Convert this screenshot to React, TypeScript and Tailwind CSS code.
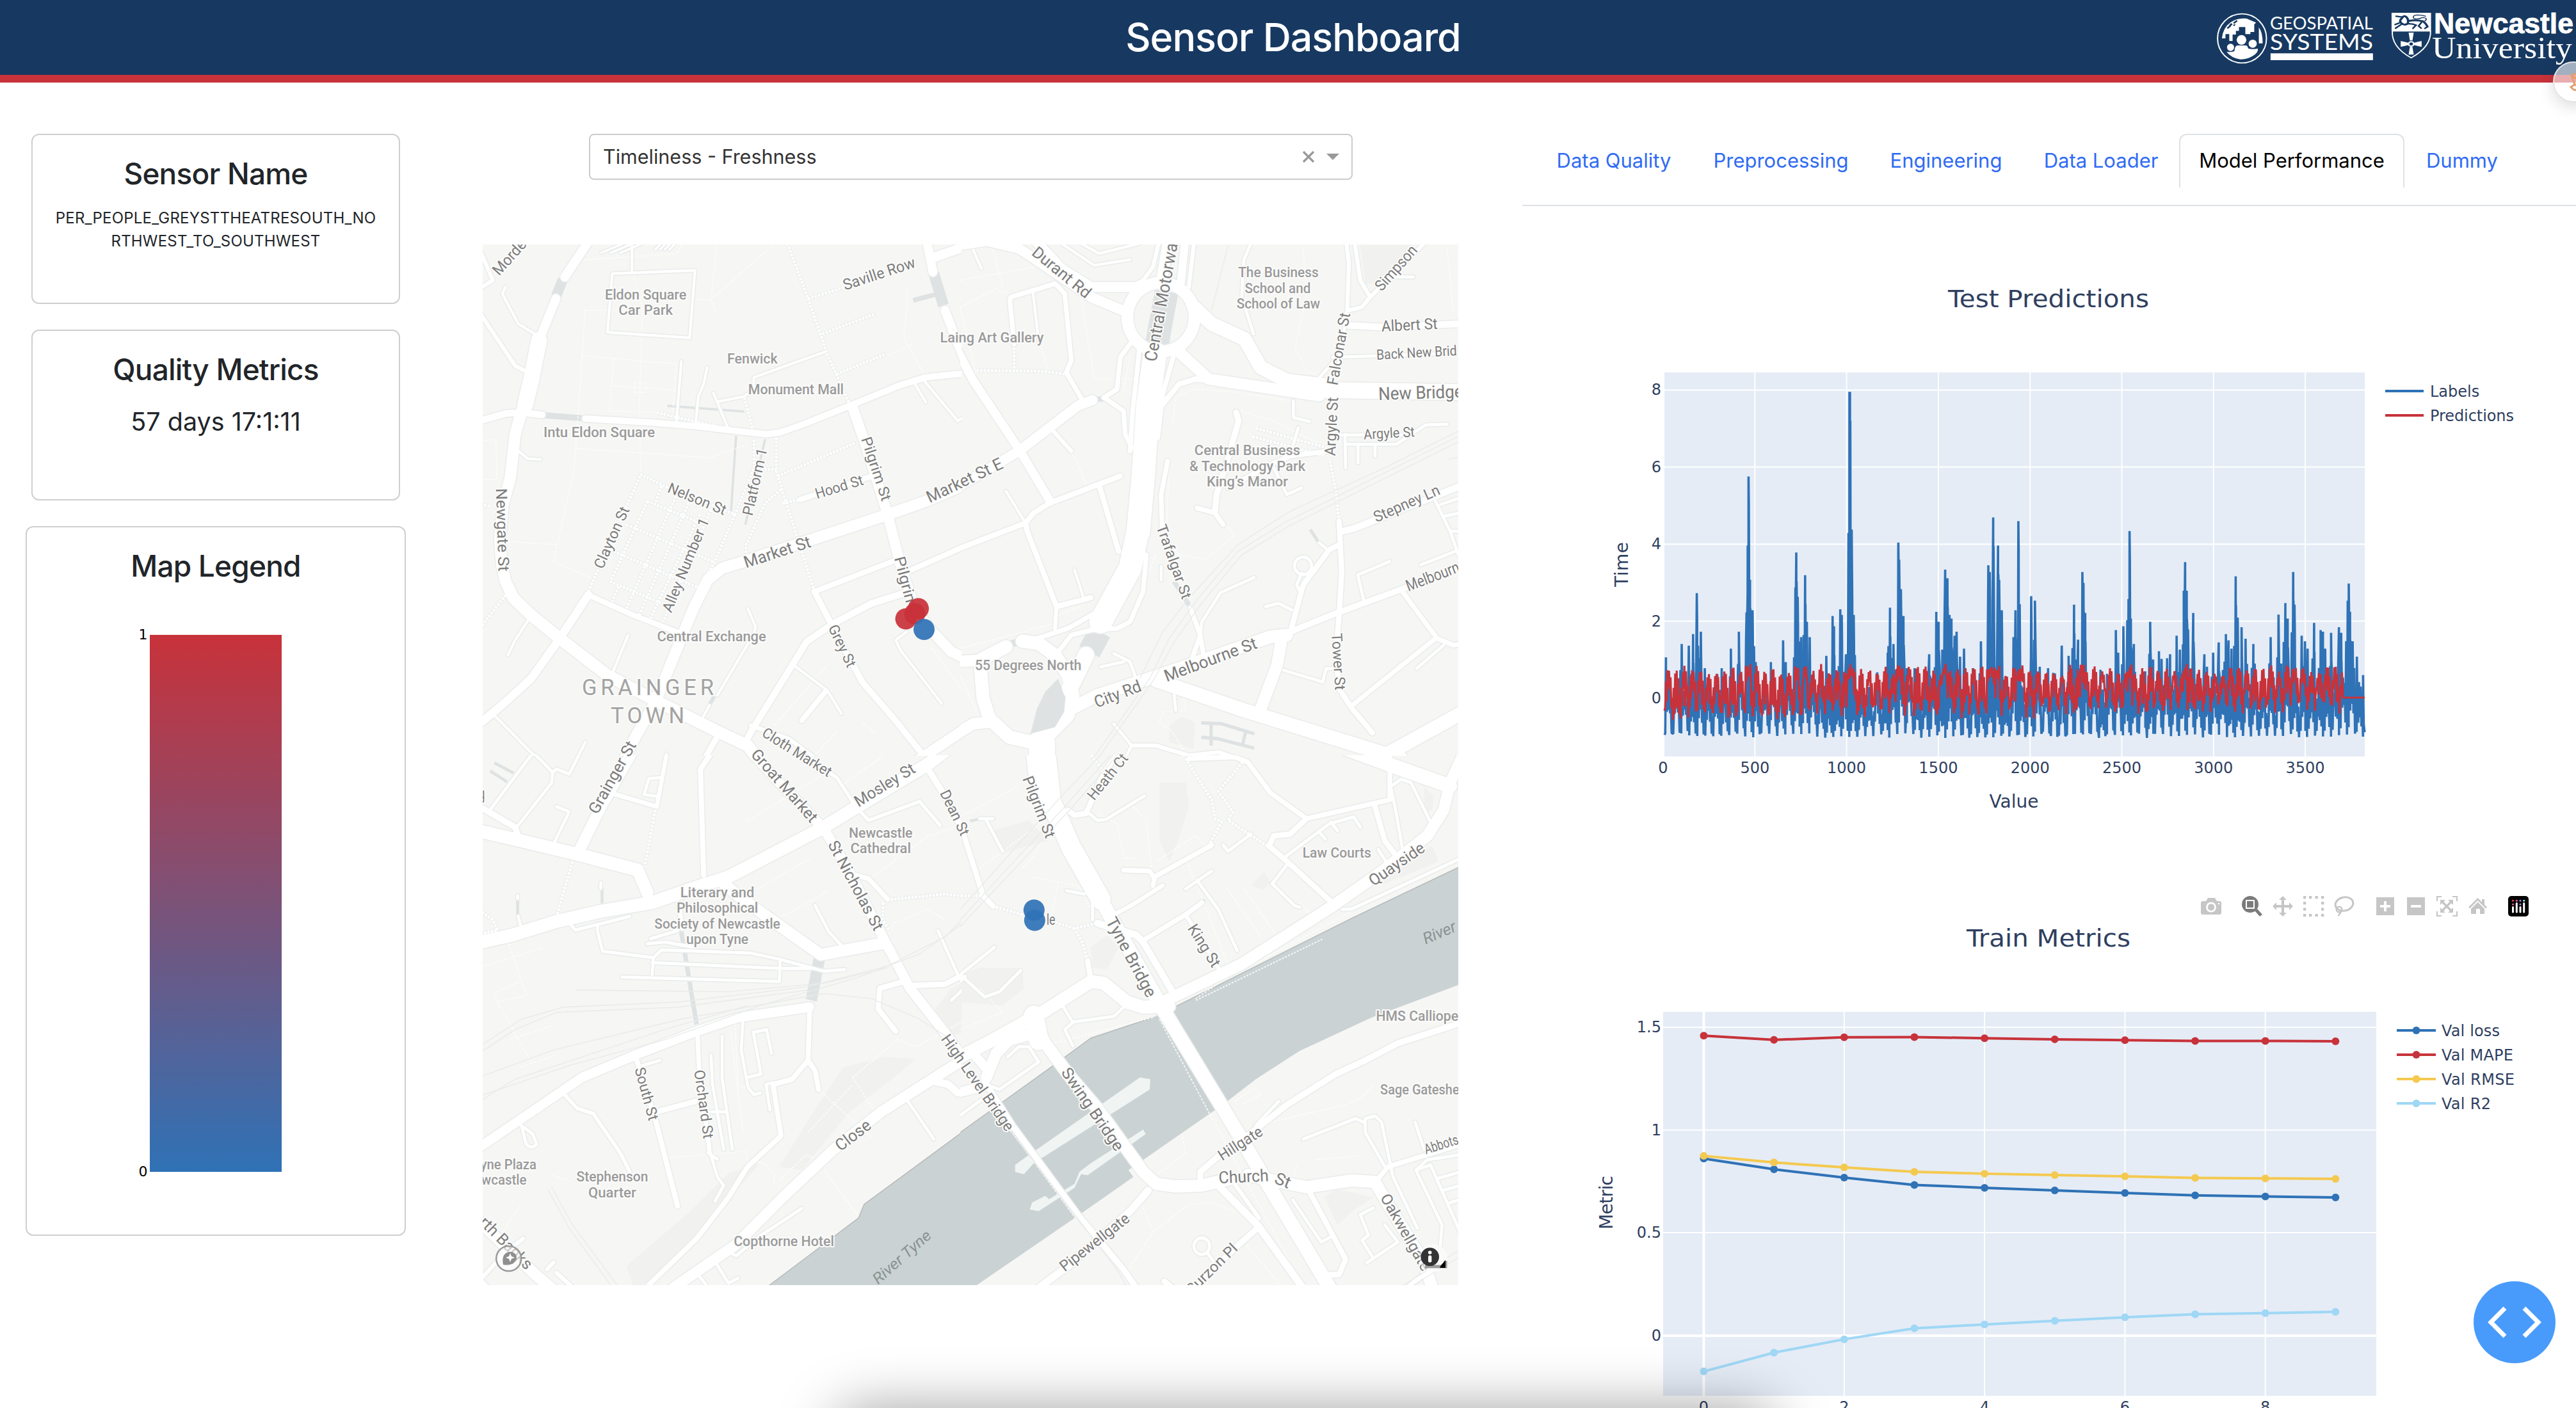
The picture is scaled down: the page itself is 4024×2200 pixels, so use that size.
import React from "react";

type Road = [number, string];
type Tile = { ox: number; oy: number; sx: number; sy: number };

const tiles: Record<string, Tile> = {
  a: { ox: 740, oy: 370, sx: 0.49745, sy: 0.52296 },
  b: { ox: 1500, oy: 370, sx: 0.5102, sy: 0.52296 },
  c: { ox: 740, oy: 1180, sx: 0.49745, sy: 0.53571 },
  d: { ox: 1500, oy: 1180, sx: 0.5102, sy: 0.53571 },
};
const tileKeys = ["a", "b", "c", "d"];
const tx = (k: string) => {
  const t = tiles[k];
  return `translate(${t.ox} ${t.oy}) scale(${t.sx} ${t.sy})`;
};
// Visible part of each tile, in map units.
const clips: Record<string, [number, number, number, number]> = {
  a: [740, 370, 762, 811],
  b: [1500, 370, 780, 811],
  c: [740, 1180, 762, 830],
  d: [1500, 1180, 780, 830],
};

const roads: Record<string, Road[]> = {
  a: [
    [28, "M370 0L286 120M258 185L205 310"],
    [50, "M205 310L180 430L162 500"],
    [36, "M165 480L145 540L130 590L115 720L92 800L82 900L88 980L100 1030L125 1080L180 1130L270 1200L420 1310L580 1390L770 1480L860 1520L900 1568"],
    [20, "M0 555L100 528L150 525L215 532"],
    [19, "M350 543L560 555L700 566L850 583L920 590L960 585L1030 562L1180 505L1340 443L1420 420L1568 405"],
    [34, "M1600 717L1420 790L1300 830L1060 905L850 970L780 990L735 1025L690 1110L600 1320L570 1390L510 1490L430 1640"],
    [32, "M1190 510L1230 620L1290 800L1305 850L1340 980L1385 1110L1440 1180L1500 1240L1600 1285"],
    [28, "M1420 0L1442 105M1435 65L1600 10M1480 220L1520 320L1600 500"],
    [25, "M360 1070L270 1200L180 1320L100 1390L0 1470"],
    [16, "M360 1070L500 1130L650 1185M1070 1060L1320 968M1375 995L1600 900"],
    [19, "M1070 1060L1130 1170L1220 1330L1320 1440L1400 1535L1430 1568"],
    [20, "M1350 1065L1250 1095L1130 1155L1045 1210L1000 1280L870 1480L850 1520"],
    [32, "M1370 1580L1600 1435"],
    [8, "M1360 1180L1325 1205L1340 1235L1470 1395M435 110L695 100L678 302L420 285ZM497 20V105M100 150L90 170L140 260L200 295M1105 343L880 420L878 460L845 478L770 492M753 467L800 575M652 372L636 560M733 390L722 440L705 478L697 560M140 640L170 663L210 665"],
    [12, "M20 40L60 130L0 165M0 200L130 385L160 400M870 1460L990 1500L1160 1620"],
    [16, "M1025 785L1250 715M1105 1358L1030 1445"],
    [8, "M1410 425L1520 550L1600 500M1380 430L1420 495M860 1110L885 1165L880 1185L765 1370M740 1400L720 1435M485 1190L437 1300M175 1140L130 1205L107 1250M1005 1280L1110 1355L1155 1425M65 1430L185 1545L230 1568M185 1545L170 1568M350 1510L320 1568M605 1545V1568"],
    [18, "M770 1485L720 1568"],
    [6, "M400 48L470 20M430 48L500 20M460 48L530 20M570 38L590 18M585 38L605 18M600 38L620 18M615 38L635 18"],
  ],
  b: [
    [34, "M640 0L615 140"],
    [24, "M690 0L675 140"],
    [12, "M718 0L700 150M612 0L590 90L560 130L520 150"],
    [36, "M615 137A103 103 0 1 1 614 137Z"],
    [72, "M596 350L575 500L560 720L545 880"],
    [70, "M548 860L520 990L430 1150"],
    [14, "M655 350L620 470L605 600M548 340L528 520L520 640M570 950L560 1060L520 1150L480 1170L400 1175L340 1190L300 1240M420 1120L330 1170L220 1205"],
    [30, "M-20 28L80 12L180 35L310 120L400 180L510 225M200 -20L310 95L400 150L530 150"],
    [42, "M715 210L770 260L870 305L920 390L1000 430L1130 445"],
    [34, "M660 335L760 425L1100 475"],
    [48, "M1000 440L1130 458L1568 465"],
    [16, "M620 500L670 440L720 425L780 430"],
    [26, "M-30 300L40 430L180 635L275 790"],
    [30, "M-20 755L180 640L360 505L405 488"],
    [14, "M440 480L480 455L490 360L520 320M440 480L500 520L505 590L525 630"],
    [14, "M165 320L152 190L155 180L290 140L320 170L340 370L325 405L375 490"],
    [8, "M222 160L240 310M350 995L378 1080M140 760L200 855M40 40L65 95M370 20L425 50L550 20M310 20L410 85L520 68"],
    [16, "M-10 934L200 855L225 825L275 795L490 715M425 740L485 940M200 855L205 880L295 1105L400 1078"],
    [12, "M275 570L340 640M295 1105L290 1170"],
    [40, "M190 1208L240 1215L290 1250L330 1310L345 1370L330 1430L270 1490M140 1225L60 1265L70 1380L90 1440L150 1495L240 1515"],
    [34, "M-20 1270L60 1265M-20 1490L40 1455L90 1450"],
    [80, "M250 1510V1580"],
    [50, "M385 1250L335 1350"],
    [38, "M340 1410L420 1370L610 1310L700 1280L950 1195L1000 1190"],
    [18, "M990 1188L1150 1125L1360 1050L1568 970"],
    [42, "M600 1325L870 1415L1250 1530L1350 1560"],
    [42, "M1280 1560L1568 1405"],
    [36, "M985 1195L970 1280L920 1410"],
    [16, "M1010 1185L1050 1040L1130 935L1160 920M1160 850L1168 1000L1160 1130L1150 1250L1160 1350L1200 1410L1262 1482"],
    [20, "M1170 880L1210 870L1568 730"],
    [9, "M1050 957A26 26 0 1 1 1049 957ZM1040 1060L1030 1040L1045 1005M1480 1220L1397 1290M990 1295L1110 1330L1120 1290L1150 1290M1235 1085L1217 1010L1315 970M1410 980L1515 940M1455 790L1500 880L1525 950M1470 800L1530 780M1480 835L1530 825M1500 880H1530M900 1018L797 1063L740 1150L735 1190M935 1105L975 1095L1015 1115M1125 935L1100 915M615 1025V985"],
    [14, "M1350 1055L1460 1200L1510 1220L1568 1210M1455 1200L1200 1400M635 670L615 770L618 870M705 1110L735 1190L745 1250M735 1190L710 1260"],
    [18, "M845 525L852 550L820 660L785 770L780 820"],
    [14, "M725 810L780 825L805 860M820 750L950 680L1010 655L1130 640"],
    [9, "M955 680L1000 770L1045 750M1020 490V540L1070 552M1035 570L1020 620M1165 592H1350M1180 620H1335L1425 562L1490 560M1178 590L1180 690M1218 620V675M1270 620V655M890 20L868 70L862 180L898 290M1140 360L1300 355L1568 345M1185 215L1165 350L1100 420M1290 120H1387M430 1285L500 1270M470 1245L520 1270L540 1325M655 1370L660 1415M470 1455L525 1520M500 1568L525 1520"],
    [12, "M1180 0L1190 80L1185 215M1205 0L1225 130L1255 180L1230 210L1190 220M1255 180L1430 10M525 1520L600 1520L700 1550L790 1540L880 1568"],
    [20, "M1190 265L1300 270L1568 258"],
  ],
  c: [
    [38, "M0 217L150 250L330 290L515 335L545 400"],
    [38, "M0 550L120 525L260 485L400 455L560 430L700 385L800 355L1090 215L1240 130L1420 30L1520 -40"],
    [34, "M510 -30L400 150L325 290"],
    [16, "M745 -5L712 40L722 350"],
    [19, "M1420 30L1500 150L1545 240L1575 320"],
    [30, "M860 -20L970 90L1100 215L1180 340L1290 540L1370 680L1480 810L1580 940"],
    [10, "M1030 0L1140 65L1200 150L1240 190L1400 135L1465 205"],
    [34, "M780 370L830 410L1010 530L1090 582L1290 548"],
    [28, "M1055 735L830 765L700 805L520 870L340 940L0 1155"],
    [15, "M1055 740L1050 890L1000 945L940 960L965 1110L860 1200L800 1290L700 1410L550 1545M1050 890L1072 920L1083 975"],
    [9, "M390 495L388 510L400 555L405 572L560 590M560 640L565 590L590 568L870 577L960 595L1100 630L1165 625M560 605L960 622H1060M465 647L960 660L962 600M545 550L600 545L690 560M555 535L640 512M300 490L320 510L490 470M138 410V418M140 470L148 500M399 372V388"],
    [14, "M645 440L655 505M1200 350L1240 360L1300 420"],
    [32, "M560 1600L640 1545L820 1430L970 1290L1130 1150L1280 1040L1440 945L1568 870"],
    [22, "M1440 950L1490 960L1520 985L1580 980"],
    [16, "M510 885L570 1060L640 1315M575 1040L695 1010"],
    [14, "M703 820L708 920L740 1150"],
    [9, "M740 1150L765 1230L785 1255L758 1300M735 1160L765 1178M780 820V940L812 1150M745 875L750 960L785 1150M733 1040H790M845 780L840 860L862 970L880 990L900 985M935 870L920 800L878 808L902 930L860 940M940 955L918 960L930 1035M530 905L585 890"],
    [11, "M285 990L325 1030L375 1045L460 1160L490 1215"],
    [9, "M150 1080L165 1135Q180 1150 198 1135L185 1105L158 1085M180 0L55 155M195 0L248 50L245 80L135 210M248 50L260 40L300 55L330 0M260 150L300 165L250 260M590 65L550 68L535 115L578 120"],
    [18, "M0 140L130 210L142 240"],
    [13, "M605 0L575 150L430 110"],
    [9, "M1072 438L1115 515L1155 555M1458 512L1520 640L1545 675L1500 715M1360 1005L1445 1120M1030 1322L895 1405L825 1460L800 1450M760 1480L800 1540L830 1525M700 1510L730 1545"],
    [16, "M1370 672L1480 668L1580 620M1350 660L1275 680L1270 740L1325 805"],
    [34, "M0 1345L120 1450L200 1520L260 1568"],
    [12, "M0 1550L100 1450L155 1410M230 1500L250 1480M260 1510L330 1568M0 1510L60 1568"],
  ],
  d: [
    [90, "M245 -20L262 120"],
    [60, "M262 100L340 270L430 420"],
    [42, "M400 370L620 740L830 1070L960 1280L1140 1568"],
    [34, "M630 715L860 610L1140 440L1290 340L1430 235L1480 160L1500 80L1568 -60"],
    [42, "M1180 -20L1350 40L1500 90"],
    [14, "M1315 -20V130L1060 185L950 110L880 20L840 5L700 10"],
    [16, "M1060 185L1010 230L960 235L945 265L995 305L1150 440M1270 150L1300 250L1340 300"],
    [9, "M990 300L1130 200L1205 180L1225 210M1135 195L1155 220M1100 225L1118 245M1320 90L1350 70L1380 80L1445 205M1320 100L1335 170L1355 280M1280 275L1310 320M1000 320L955 375L1025 440L1040 443M1170 450L1200 448L1568 285"],
    [38, "M-10 885L120 820L260 745L400 660L440 665L510 720L560 735L640 732"],
    [60, "M225 760L240 830"],
    [36, "M240 800L260 840L330 930L420 1030L560 1215L600 1250L660 1258L740 1255L830 1235M880 1225L1060 1260L1200 1240L1270 1245L1310 1310L1420 1480L1450 1568"],
    [16, "M400 655L390 600M0 200L70 410L100 440"],
    [9, "M80 190L130 280M60 185H100M75 960L120 975L240 895L210 850L180 850L145 880M0 1050L65 1005M310 725L345 780L320 800L345 848M345 778L470 762L500 735M325 395L380 405M405 430V480M0 640L105 560M0 640L75 705L120 690L185 628M0 660L15 645"],
    [34, "M80 940L110 870L150 830L210 815"],
    [28, "M-10 985L75 965M40 870L85 920"],
    [12, "M470 465L520 440L620 380M690 465L800 635"],
    [14, "M500 335L580 338L595 360L590 380M595 355L770 262M560 540L690 465L740 430"],
    [20, "M420 490L540 525L560 545L650 690"],
    [9, "M725 365L790 450L848 570M690 390L770 338M805 262L820 280L890 230M395 170L420 190L445 188L565 118M905 1080L975 1010"],
    [16, "M330 160L350 175L385 170L440 50L480 0"],
    [18, "M80 960L160 1080L360 1340L500 1500L550 1568"],
    [18, "M735 1250V1215L790 1170L900 1095L1000 1020L1150 930L1240 890L1340 840L1568 770"],
    [22, "M220 1568L330 1490L520 1330L575 1270M785 1250L910 1370L1060 1568"],
    [12, "M840 1250L870 1290L915 1350"],
    [18, "M915 1375L850 1430L700 1568M625 1535L650 1555"],
    [9, "M740 1408A24 24 0 1 1 739 1408ZM755 1450L775 1475"],
    [16, "M1070 1275L1180 1470L1160 1515L1110 1515"],
    [9, "M1018 1297L1105 1420L1135 1405M1240 1100V1060L1270 1052L1290 1070L1325 1230L1400 1380M1300 1200L1240 1100M1050 1120L1210 1060L1235 1070M1393 1070L1420 1150M1568 1160L1430 1180L1395 1210L1475 1370L1470 1430M1395 1210L1440 1195L1530 1390M1460 1235L1568 1205M1475 1270L1568 1245M1500 1305L1568 1285M1265 1320L1225 1340L1250 1400L1230 1415L1260 1460M1245 1480L1340 1420L1300 1370"],
    [14, "M1275 1240L1310 1200L1568 1125M1350 1568L1450 1490"],
  ],
};

const footways: Record<string, string> = {
  a: "M360 1060L525 710L600 745L820 830L880 690V600M820 830L755 975L705 1050M545 790L700 850M545 790L430 1030L590 1095M635 775L480 1110M675 795L520 1130M710 830L555 1140M745 815L595 1150M480 860L755 972M440 940L705 1048M850 480L880 590M965 755L915 795L855 920V960M955 715L1200 615M880 695H950M950 600L950 700L1010 880L1070 1060M985 20L1050 185L1110 350L1180 500M1050 185L1200 140M1095 290L1260 230M1140 410L1295 350M100 1070L20 1170M575 525L800 575M590 745L570 795M970 795L1025 785M455 1045L435 1090M0 795L50 805",
  b: "M50 400L160 400L260 402L330 412M165 320V400M1132 670L1150 760L1160 850M905 572L1120 630M895 597L1120 655",
  c: "M570 160L537 325M310 310L262 465M0 525L75 510L60 480L28 460M1568 415L1480 405L1300 422M1285 430V480L1305 510",
  d: "M390 600L375 550L350 505L420 490M350 505L290 487M190 465L100 440M75 410H0M760 265L800 195L780 185L770 130L690 10M865 20L790 105L835 165L820 190L940 265M400 0L440 50",
};

const trails: Record<string, string> = {
  a: "M345 220H510M350 218L320 640L315 700L250 970L370 1020M320 632L740 660L860 620M500 100L530 220L520 520L525 710M335 70L640 50L655 20M765 20L745 188L940 25M600 185L745 188L760 225M440 365L425 520L600 525M635 380L625 525M340 355L635 380M440 445L635 458M505 435H540V465H505ZM100 910L258 920M28 610L70 605L72 725H28M1360 160V220L1350 300L1420 420M1300 355L1380 320M1440 1230L1530 1350M945 1460L1110 1280M1140 1480L1050 1568M1220 1450L1260 1485M1510 1230H1568",
  b: "M0 210L110 155L140 170M100 40L130 150M370 180L410 425L560 425M240 310L270 400M0 130L230 90M0 210L60 460L200 640M500 460L520 350M1050 30L1060 180L1025 330L1060 400L1110 420M650 560L660 480L720 455L850 465L1010 490M640 680L630 900L670 950L750 965L840 890L810 860M860 520L960 550L1120 630M0 1230L290 1155M300 1130L370 1105M1490 30L1510 220M280 570L350 660L385 740M600 950L560 1040M400 1380L610 1310M0 1310L50 1420M700 1560L650 1480L610 1450L620 1420L690 1415L685 1380",
  c: "M600 1175L855 1155L860 1185L910 1190L945 1220L940 1260M805 790L845 1100M820 785L830 965L860 970M1083 975L1255 1120M1190 940L1330 830L1390 850L1568 760M1190 940L1260 1040M1100 1210L1208 1345M110 550L165 700L75 720L65 695L145 660M75 720L180 895M30 615L215 563M115 828L245 790M145 910L260 875M855 195L1090 60M890 390L1060 300M970 470L1115 395M1230 370L1420 240L1568 190M1310 510L1320 490L1425 450L1480 480M1160 85L1290 0M90 1390L145 1315M245 1225L310 1245M960 1240L1045 1165L1080 1180M1050 1100L1190 960",
  d: "M0 180L180 90M60 330L300 160M190 330L220 300L300 160M210 355L360 380L430 500M280 470L300 370M355 270L370 350M420 170L480 200L500 300H540M530 150L570 190L585 330M600 310L720 235L760 270M690 300L820 610M720 710L800 660L1200 455M815 385L920 530M865 385L975 535M1040 430L1110 500M0 800L130 750L60 680M210 860L590 765M580 1240L690 1160L680 1110M610 770L760 1040L1060 1568M840 1010L900 970L920 990L860 1020M950 1070L1180 1020L1230 1000L1265 960M1085 1180L1230 1168M1030 1195L1020 1240M590 1390L700 1310L770 1305L840 1330M870 1420L1000 1568M470 1568L590 1390L555 1310M120 1050L360 1360",
};

const rails: Record<string, string> = {
  a: "",
  b: "M400 1568L580 1320L640 1200L720 1090L850 940L1000 850L1568 575M415 1568L595 1320L655 1210L735 1100L860 952L1010 862L1568 592M550 1320L620 1180L700 1080L850 920L1010 820L1300 690L1568 560M770 220L820 25M1495 665L1568 650",
  c: "M0 860L150 770L280 735L640 720L1050 675L1300 615L1480 530L1568 450M0 945L250 860L650 770L1100 695L1250 710L1400 770L1500 830M320 685L800 690L1100 665L1300 620M0 1000L300 905L600 830L900 730L1200 650L1400 580L1568 470M0 1020L130 945L600 800L860 730M0 880L130 800L260 750L640 735L1050 685M232 1265L300 1380L430 1545M245 1260L310 1370L450 1545",
  d: "M0 480L320 150L460 0M0 500L340 155L480 0M0 450L300 130L430 0M1320 1568L1568 1420M1350 1568L1568 1440M100 1030L480 1500L520 1568",
};

const tunnels: Record<string, Road[]> = {
  a: [
    [32, "M280 128L258 178"],
    [18, "M220 533L340 542"],
    [34, "M1445 110L1475 205"],
    [14, "M1380 190L1450 172"],
    [7, "M608 505L850 522M824 595L808 820M915 605L853 860"],
    [12, "M757 1370L742 1395"],
  ],
  b: [
    [72, "M632 165L602 320"],
    [70, "M428 1180L395 1240"],
    [16, "M408 485H438"],
    [22, "M150 1218L180 1210"],
    [10, "M738 1452L800 1455L900 1485M738 1495L790 1500L900 1528M768 1452V1520M875 1475L865 1515M1072 875L1095 910"],
    [14, "M655 1030L700 1100"],
  ],
  c: [
    [36, "M1085 595L1060 715"],
    [14, "M650 505L700 785"],
    [9, "M138 415V468M403 388V432M400 550V566M65 22L125 52M52 46L105 78"],
  ],
  d: [[8, "M30 192L60 186M730 432L750 422"]],
};

const water: Record<string, string> = {
  a: "",
  b: "",
  c: "M900 1568L930 1545L1130 1405L1208 1350L1226 1310L1580 1068V1568Z",
  d: "M-10 1107L285 905L400 825L590 765L645 740L1200 475L1568 308V655L1525 670L1260 765L1040 862L905 945L810 1015L765 1045L515 1210L530 1230L350 1350L50 1546V1568H-10Z",
};
const quays: Record<string, string> = {
  a: "",
  b: "",
  c: "M900 1568L930 1545L1130 1405L1208 1350L1226 1310L1580 1068",
  d: "M-10 1107L285 905L400 825L590 765M645 740L1200 475L1568 308",
};
const land: Record<string, string> = {
  a: "",
  b: "",
  c: "",
  d: "M168 1195L185 1183L550 940L582 945L580 975L225 1190L195 1222L168 1215ZM213 1325L220 1305L260 1285L272 1295L350 1250L365 1215L400 1190L560 1092L568 1105L390 1225L370 1222L350 1262L240 1330Z",
};
const tints: Record<string, string> = {
  a: "",
  b: "M1225 25L1380 25L1300 140L1240 140ZM640 1460L675 1435L718 1450L715 1530L640 1510Z",
  c: "M1160 910L1290 880L1390 885L1320 940L1180 1040L1030 1210L960 1200L1080 1020ZM680 1330L800 1220L900 1190L700 1400L560 1545H500L480 1490ZM1450 740L1500 680L1568 650V800L1500 820L1450 780Z",
  d: "M1115 1290L1150 1265L1265 1290L1200 1330L1155 1370ZM890 380L930 340L950 370L930 392ZM610 80L690 80L700 150L670 240L640 310L610 250ZM400 560L450 525L485 560L450 625L405 620ZM0 640L60 620L190 620L195 680L130 730L0 720ZM1230 380L1410 280L1445 265L1465 310L1300 375ZM1420 90L1450 120L1445 160L1420 170ZM100 220L210 190L270 250L130 285Z",
};

type Line = [string, string, number, number, number, number, number];
const streetNames: Line[] = [
  ["a", "Morde", 80, 118, 168, 25, 24],
  ["a", "Saville Row", 1166, 160, 1390, 90, 24],
  ["a", "Newgate St", 70, 752, 78, 1000, 24],
  ["a", "Clayton St", 405, 995, 490, 815, 23],
  ["a", "Nelson St", 606, 762, 785, 832, 23],
  ["a", "Alley Number 1", 620, 1125, 740, 848, 23],
  ["a", "Platform 1", 875, 835, 922, 635, 23],
  ["a", "Hood St", 1078, 783, 1226, 740, 23],
  ["a", "Pilgrim St", 1216, 604, 1282, 792, 23],
  ["a", "Market St E", 1432, 796, 1666, 690, 26],
  ["a", "Market St", 855, 990, 1062, 926, 26],
  ["a", "Pilgrim", 1320, 960, 1362, 1112, 24],
  ["a", "Grey St", 1112, 1168, 1174, 1290, 23],
  ["a", "Cloth Market", 902, 1490, 1112, 1615, 23],
  ["a", "Groat Market", 868, 1548, 1058, 1753, 25],
  ["a", "Grainger St", 388, 1728, 512, 1518, 25],
  ["b", "Durant Rd", 216, 52, 384, 186, 25],
  ["b", "Central Motorwa", 600, 375, 666, 22, 27],
  ["b", "Simpson", 1290, 165, 1402, 42, 24],
  ["b", "Falconar St", 1155, 445, 1194, 230, 24],
  ["b", "Argyle St", 1148, 655, 1157, 480, 24],
  ["b", "Albert St", 1290, 283, 1462, 275, 24],
  ["b", "Back New Brid", 1275, 367, 1521, 354, 22],
  ["b", "New Bridge", 1281, 488, 1540, 480, 28],
  ["b", "Argyle St", 1236, 605, 1392, 597, 22],
  ["b", "Stepney Ln", 1274, 854, 1472, 768, 24],
  ["b", "Melbourn", 1372, 1060, 1532, 1000, 25],
  ["b", "Trafalgar St", 600, 866, 680, 1085, 23],
  ["b", "Tower St", 1137, 1185, 1148, 1355, 23],
  ["b", "Melbourne St", 632, 1330, 912, 1228, 26],
  ["b", "City Rd", 418, 1408, 558, 1356, 26],
  ["c", "Mosley St", 1208, 152, 1390, 48, 25],
  ["c", "Dean St", 1463, 110, 1530, 238, 23],
  ["c", "St Nicholas St", 1111, 260, 1258, 515, 25],
  ["c", "South St", 505, 915, 550, 1068, 23],
  ["c", "Orchard St", 692, 920, 722, 1120, 23],
  ["c", "rth Banks", 15, 1365, 165, 1503, 25],
  ["c", "y", 22, 130, 40, 125, 24],
  ["c", "Close", 1152, 1157, 1252, 1086, 26],
  ["c", "High Level Bridge", 1466, 828, 1672, 1100, 24],
  ["d", "Pilgrim St", 190, 68, 262, 245, 24],
  ["d", "Heath Ct", 410, 134, 516, 10, 23],
  ["d", "Quayside", 1265, 383, 1426, 278, 25],
  ["d", "Tyne Bridge", 445, 484, 572, 710, 26],
  ["d", "King St", 695, 505, 772, 622, 24],
  ["d", "Swing Bridge", 307, 925, 476, 1158, 25],
  ["d", "Hillgate", 802, 1184, 930, 1106, 24],
  ["d", "Church", 792, 1249, 945, 1242, 26],
  ["d", "St", 959, 1247, 1004, 1264, 26],
  ["d", "Pipewellgate", 320, 1508, 522, 1357, 24],
  ["d", "Curzon Pl", 708, 1576, 852, 1442, 23],
  ["d", "Oakwellgate", 1285, 1290, 1415, 1508, 24],
  ["d", "Abbots", 1426, 1164, 1528, 1133, 22],
  ["d", "le", 264, 495, 291, 495, 23],
];
const riverNames: Line[] = [
  ["c", "River Tyne", 1270, 1545, 1440, 1405, 24],
  ["d", "River", 1425, 552, 1522, 512, 25],
];

type Poi = [string, string, number, number, number];
const pois: Poi[] = [
  ["a", "Eldon Square", 540, 188, 256],
  ["a", "Car Park", 540, 234, 170],
  ["a", "Fenwick", 875, 378, 158],
  ["a", "Monument Mall", 1012, 470, 300],
  ["a", "Intu Eldon Square", 394, 598, 350],
  ["a", "Central Exchange", 747, 1209, 342],
  ["b", "Laing Art Gallery", 97, 316, 317],
  ["b", "The Business", 974, 121, 246],
  ["b", "School and", 972, 168, 202],
  ["b", "School of Law", 974, 214, 256],
  ["b", "Central Business", 879, 652, 324],
  ["b", "& Technology Park", 879, 699, 355],
  ["b", "King’s Manor", 879, 746, 249],
  ["b", "55 Degrees North", 208, 1295, 326],
  ["c", "Newcastle", 1278, 240, 200],
  ["c", "Cathedral", 1278, 285, 190],
  ["c", "Literary and", 765, 415, 232],
  ["c", "Philosophical", 765, 460, 256],
  ["c", "Society of Newcastle", 765, 505, 395],
  ["c", "upon Tyne", 765, 550, 195],
  ["c", "Stephenson", 435, 1243, 225],
  ["c", "Quarter", 435, 1289, 150],
  ["c", "yne Plaza", 109, 1208, 176],
  ["c", "wcastle", 95, 1253, 142],
  ["c", "Copthorne Hotel", 974, 1432, 315],
  ["d", "Law Courts", 1153, 299, 210],
  ["d", "HMS Calliope", 1399, 775, 252],
  ["d", "Sage Gateshe", 1407, 990, 242],
];

function Along({ l, fill, italic }: { l: Line; fill: string; italic?: boolean }) {
  const t = tiles[l[0]];
  const x1 = t.ox + l[2] * t.sx;
  const y1 = t.oy + l[3] * t.sy;
  const x2 = t.ox + l[4] * t.sx;
  const y2 = t.oy + l[5] * t.sy;
  const len = Math.hypot(x2 - x1, y2 - y1);
  const ang = (Math.atan2(y2 - y1, x2 - x1) * 180) / Math.PI;
  return (
    <text
      transform={`translate(${x1} ${y1}) rotate(${ang})`}
      fontSize={l[6]}
      textLength={len}
      lengthAdjust="spacingAndGlyphs"
      fill={fill}
      fontStyle={italic ? "italic" : "normal"}
      stroke={italic ? "none" : "#fbfbfa"}
      strokeWidth={italic ? 0 : 4}
      strokeLinejoin="round"
      paintOrder="stroke"
    >
      {l[1]}
    </text>
  );
}

function CityMap() {
  return (
    <svg className="block h-[1626px] w-[1524px] font-['Roboto',sans-serif]" viewBox="754 382 1524 1626">
      <defs>
        {tileKeys.map((k) => (
          <clipPath key={k} id={`tile-${k}`}>
            <rect x={clips[k][0]} y={clips[k][1]} width={clips[k][2]} height={clips[k][3]} />
          </clipPath>
        ))}
      </defs>
      <rect x="754" y="382" width="1524" height="1626" fill="#f6f6f4" />
      {tileKeys.map((k) => (
        <g key={k} clipPath={`url(#tile-${k})`}>
          <g transform={tx(k)} fill="none">
            <path d={tints[k]} fill="#f1f1ef" />
            <path d={water[k]} fill="#cad2d3" />
            <path d={quays[k]} stroke="#b7bcbb" strokeWidth="3" />
            <path d={land[k]} fill="#f0f5f4" />
            {tunnels[k].map((r, i) => (
              <path key={i} d={r[1]} stroke="#dee2e3" strokeWidth={r[0]} />
            ))}
            <path d={trails[k]} stroke="#fdfdfc" strokeWidth="3" strokeDasharray="7 4" />
          </g>
        </g>
      ))}
      {tileKeys.map((k) => (
        <g key={k} clipPath={`url(#tile-${k})`}>
          <g transform={tx(k)} fill="none" strokeLinejoin="round">
            {roads[k].map((r, i) => (
              <path key={i} d={r[1]} stroke="#e9edeb" strokeWidth={r[0] + 6} strokeLinecap="round" />
            ))}
            <path d={footways[k]} stroke="#edf0ef" strokeWidth="12" />
          </g>
        </g>
      ))}
      {tileKeys.map((k) => (
        <g key={k} clipPath={`url(#tile-${k})`}>
          <g transform={tx(k)} fill="none" strokeLinejoin="round">
            <path d={footways[k]} stroke="#ffffff" strokeWidth="8" strokeDasharray="7 4" />
            {roads[k].map((r, i) => (
              <path key={i} d={r[1]} stroke="#ffffff" strokeWidth={r[0]} strokeLinecap="round" />
            ))}
            <path d={rails[k]} stroke="#e8ebea" strokeWidth="2.5" />
          </g>
        </g>
      ))}
      <g transform={tx("b")}>
        <path d="M640 165L662 170L640 318L610 318L585 300L600 170Z" fill="#dee2e3" />
        <path d="M300 1320L322 1380L318 1420L290 1465L215 1485L235 1410L260 1360Z" fill="#dee2e3" />
      </g>
      <g transform={tx("d")}>
        <path d="M722 715L1112 535" fill="none" stroke="#f6f6f4" strokeWidth="4" strokeDasharray="6 4" />
      </g>

      {riverNames.map((l, i) => (
        <Along key={i} l={l} fill="#8a9294" italic />
      ))}
      <g fontWeight="500">
        {pois.map((p, i) => {
          const t = tiles[p[0]];
          return (
            <text
              key={i}
              x={t.ox + p[2] * t.sx}
              y={t.oy + p[3] * t.sy}
              fontSize="21.5"
              textAnchor="middle"
              textLength={p[4] * t.sx}
              lengthAdjust="spacingAndGlyphs"
              fill="#9a9a9a"
              stroke="#fbfbfa"
              strokeWidth="4"
              strokeLinejoin="round"
              paintOrder="stroke"
            >
              {p[1]}
            </text>
          );
        })}
      </g>
      {streetNames.map((l, i) => (
        <Along key={i} l={l} fill="#7c7c7c" />
      ))}
      <g fill="#a3a3a3" fontSize="34.5" stroke="#fbfbfa" strokeWidth="4" paintOrder="stroke">
        <text x="909" y="1086" textLength="206">GRAINGER</text>
        <text x="954" y="1129.500" textLength="115">TOWN</text>
      </g>

      <g fillOpacity="0.93">
        <circle cx="1415" cy="967" r="16.5" fill="#c8323a" />
        <circle cx="1429" cy="959" r="16.5" fill="#c8323a" />
        <circle cx="1434.5" cy="951" r="16.5" fill="#c8323a" />
        <circle cx="1443.5" cy="983.5" r="16.5" fill="#2f72b6" />
        <circle cx="1615.3" cy="1422" r="16.5" fill="#2f72b6" />
        <circle cx="1616.3" cy="1438" r="16.5" fill="#2f72b6" />
      </g>

      <circle cx="794.7" cy="1966.5" r="19.5" fill="#ffffff" fillOpacity="0.6" stroke="#9a9a9a" strokeWidth="2.5" />
      <path d="M786 1976C783 1961 790 1955 799 1956C808 1958 809 1967 804 1972C799 1977 792 1977 786 1976Z" fill="#8f8f8f" />
      <path d="M797 1958L799 1963L804 1965L799 1967L797 1972L795 1967L790 1965L795 1963Z" fill="#ffffff" />

      <circle cx="2239" cy="1966" r="22" fill="#ffffff" fillOpacity="0.55" />
      <path d="M2226 1979H2258V1970" fill="none" stroke="#9b9b9b" strokeWidth="5" />
      <path d="M2251 1977L2258 1969V1981H2249Z" fill="#000000" />
      <circle cx="2233.7" cy="1963.8" r="14.3" fill="#333333" />
      <circle cx="2233.7" cy="1957" r="2.8" fill="#ffffff" />
      <rect x="2231" y="1961.5" width="5.4" height="11" rx="2.5" fill="#ffffff" />
    </svg>
  );
}

// Peaks of the observed series: [x, y] pairs in the drawing's own units.
const firstHalf: [number, number][] = [
  [95, 1005], [108, 1075], [150, 962], [175, 967], [190, 930], [203, 798], [217, 922], [231, 1040], [290, 1040], [322, 977],
  [350, 922], [377, 860], [381, 645], [384, 422], [389, 755], [398, 853], [409, 1020], [462, 1020], [505, 950], [514, 1020], [548, 780], [551, 667], [556, 810],
  [568, 940], [582, 740], [588, 890], [598, 940], [656, 1000], [678, 872], [683, 905], [705, 850], [710, 868], [725, 995], [737, 149], [739, 149], [743, 700],
  [747, 830], [752, 868], [805, 1100], [871, 990], [879, 845], [891, 962], [908, 635], [911, 690], [917, 785], [926, 872], [938, 1040], [965, 1040],
  [1016, 995], [1041, 858], [1049, 890], [1062, 980], [1072, 722], [1080, 750], [1087, 868], [1094, 880], [1105, 935], [1112, 922], [1124, 1003],
  [1138, 977], [1169, 1040], [1197, 953], [1223, 708], [1228, 730], [1240, 554], [1257, 645], [1261, 755], [1270, 853], [1311, 940], [1318, 853],
  [1328, 566], [1373, 808], [1386, 822], [1403, 1035], [1432, 1040], [1480, 967], [1504, 1000], [1523, 835], [1537, 948], [1552, 730],
  [1556, 765], [1562, 862],
];
const secondHalf: [number, number][] = [
  [120, 1045], [140, 1058], [167, 917], [174, 990], [190, 905], [202, 885], [209, 598], [213, 880], [222, 962], [257, 1050], [272, 890],
  [281, 1012], [299, 985], [307, 1010], [324, 1008], [333, 995], [353, 935], [363, 980], [375, 790], [379, 698], [384, 790], [388, 915], [404, 862],
  [438, 995], [446, 1035], [465, 990], [482, 957], [504, 930], [512, 950], [521, 977], [534, 744], [540, 877], [552, 908], [564, 945],
  [588, 962], [592, 1025], [620, 1085], [641, 940], [650, 1070], [665, 867], [673, 1025], [686, 830], [693, 880], [710, 730], [714, 835],
  [736, 935], [746, 953], [754, 977], [774, 894], [794, 917], [801, 922], [808, 977], [826, 926], [850, 908], [857, 926], [877, 822], [880, 767],
  [884, 858], [892, 953], [905, 1003], [911, 1095], [924, 1062],
];

function rng(seed: number) {
  let s = seed;
  return () => {
    s = (s * 1664525 + 1013904223) % 4294967296;
    return s / 4294967296;
  };
}

const Y0 = 1091;
const UNIT = 60.2;

function buildSeries() {
  const r = rng(7);
  const peaks = [
    ...firstHalf.map(([x, y]) => [2560 + x * 0.44643, 540 + y * 0.48469]),
    ...secondHalf.map(([x, y]) => [3220 + x * 0.5102, 540 + y * 0.48469]),
  ];
  // Each day rises from a night-time trough, with its own height and depth.
  const days = Array.from({ length: 100 }, () => ({ high: r(), low: r(), red: r(), redLow: r() }));
  const pts: [number, number][] = [];
  let n = 0;
  for (let x = 2600; x < 3694; x += 1.25) {
    n += 1;
    const t = (x - 2600) / 12.55;
    const d0 = days[Math.floor(t)];
    const day = Math.abs(Math.sin(t * Math.PI));
    const high = -0.95 + Math.pow(day, 0.8) * (1.15 + d0.high * 0.55);
    const low = -1.03 + d0.low * 0.12 + Math.max(0, day - 0.3) * (0.35 + d0.low * 0.5 + r() * 0.6);
    let v = n % 2 ? high : low;
    for (const p of peaks) {
      const d = Math.abs(x - p[0]);
      const h = (Y0 - p[1]) / UNIT;
      if (d < 2.6 && h > 1.1 && n % 2) v = Math.max(v, h * (0.35 + r() * 0.25));
    }
    pts.push([x, Y0 - v * UNIT]);
  }
  peaks.forEach((p) => {
    pts.push([p[0], p[1]]);
    pts.push([p[0] + 0.5, Math.min(Y0 + 10, p[1] + 45)]);
  });
  pts.sort((m, q) => m[0] - q[0]);

  const red: [number, number][] = [];
  n = 0;
  for (let x = 2600; x < 3660; x += 1.2) {
    n += 1;
    const t = (x - 2600) / 12.55;
    const d0 = days[Math.floor(t)];
    const day = Math.abs(Math.sin(t * Math.PI));
    const late = (x - 2600) / 1060;
    const low = -0.68 + 0.24 * late + d0.redLow * 0.25;
    const peak = 0.45 + d0.red * 0.25;
    const top = low + 0.12 + Math.pow(day, 0.6) * (peak - low) + r() * 0.08;
    let v = n % 2 ? top : low + Math.pow(day, 1.1) * (0.3 + r() * 0.6);
    for (const p of peaks) {
      if (Math.abs(x - p[0]) < 3 && p[1] < 900) v = n % 2 ? 0.7 + r() * 0.2 : 0.35 + r() * 0.3;
    }
    red.push([x, Y0 - v * UNIT]);
  }
  red.push([3660, Y0 - 1], [3694, Y0 - 1]);
  const str = (a: [number, number][]) => a.map((p) => `${p[0].toFixed(1)},${p[1].toFixed(1)}`).join(" ");
  return { blue: str(pts), red: str(red) };
}
const series = buildSeries();

const INK = "#2f3f5f";

function TestPredictions() {
  return (
    <svg className="block h-[1048px] w-[1646px] font-['DejaVu_Sans',sans-serif]" viewBox="2378 322 1646 1048" fill={INK}>
      <text x="3200" y="480" fontSize="37" textAnchor="middle" textLength="314" lengthAdjust="spacingAndGlyphs">Test Predictions</text>
      <rect x="2600" y="582" width="1094" height="600" fill="#e5ecf6" />
      <g stroke="#ffffff" strokeWidth="2">
        {[1, 2, 3, 4, 5, 6, 7].map((i) => (
          <line key={i} x1={2598 + i * 143.3} x2={2598 + i * 143.3} y1="582" y2="1182" />
        ))}
        {[2, 4, 6, 8].map((v) => (
          <line key={v} x1="2600" x2="3694" y1={Y0 - v * UNIT} y2={Y0 - v * UNIT} />
        ))}
        <line x1="2600" x2="3694" y1={Y0} y2={Y0} strokeWidth="4" />
      </g>
      <polyline points={series.blue} fill="none" stroke="#2f72b6" strokeWidth="3.6" strokeLinejoin="bevel" />
      <polyline points={series.red} fill="none" stroke="#c8323a" strokeWidth="3.2" strokeLinejoin="bevel" />
      <g fontSize="24">
        {[0, 2, 4, 6, 8].map((v) => (
          <text key={v} x="2595" y={Y0 - v * UNIT + 8} textAnchor="end">{v}</text>
        ))}
        {[0, 500, 1000, 1500, 2000, 2500, 3000, 3500].map((v) => (
          <text key={v} x={2598 + v * 0.2866} y="1207.500" textAnchor="middle">{v}</text>
        ))}
        <text x="3796" y="619.5">Labels</text>
        <text x="3796" y="657.5" textLength="131">Predictions</text>
      </g>
      <g fontSize="28">
        <text x="3146" y="1261.500" textAnchor="middle" textLength="77">Value</text>
        <text transform="translate(2543 882) rotate(-90)" textAnchor="middle" textLength="70">Time</text>
      </g>
      <line x1="3726" x2="3786" y1="611" y2="611" stroke="#2f72b6" strokeWidth="4" />
      <line x1="3726" x2="3786" y1="649" y2="649" stroke="#c8323a" strokeWidth="4" />
    </svg>
  );
}

const metrics = [
  { name: "Val loss", color: "#2f72b6", len: 91, y: [613, 654, 686, 714, 725, 735, 745, 754, 758, 762] },
  { name: "Val MAPE", color: "#c8323a", len: 112, y: [143, 158.5, 149, 148, 152.5, 156.5, 160, 163, 163, 164] },
  { name: "Val RMSE", color: "#f4c94f", len: 114, y: [603, 628, 647, 664, 671, 676, 681, 687, 689, 691] },
  { name: "Val R2", color: "#9fd7f5", len: 77, y: [1428, 1356, 1305, 1263, 1248, 1234, 1221, 1209, 1205, 1200] },
];

function ModeBar() {
  return (
    <g fill="#c6c6c6" stroke="none">
      <path d="M3441 1408H3446L3449 1403H3460L3463 1408H3467Q3470 1408 3470 1411V1426Q3470 1429 3467 1429H3441Q3438 1429 3438 1426V1411Q3438 1408 3441 1408Z" />
      <circle cx="3454" cy="1417.5" r="8" fill="#ffffff" />
      <circle cx="3454" cy="1417.5" r="5.2" />
      <circle cx="3466" cy="1412" r="1.3" fill="#ffffff" />
      <g fill="#7b7b7b">
        <circle cx="3515" cy="1413" r="13" />
        <path d="M3522 1423L3526 1420L3534 1429L3530 1432Z" />
        <rect x="3509" y="1407" width="12" height="12" fill="#7b7b7b" stroke="#ffffff" strokeWidth="2" />
      </g>
      <path d="M3566 1400L3572 1406H3568V1414H3576V1410L3582 1416L3576 1422V1418H3568V1426H3572L3566 1432L3560 1426H3564V1418H3556V1422L3550 1416L3556 1410V1414H3564V1406H3560Z" />
      <g>
        {[3598, 3607, 3616.5, 3626].map((x) => (
          <React.Fragment key={x}>
            <rect x={x} y="1400" width="4.3" height="4.3" />
            <rect x={x} y="1428" width="4.3" height="4.3" />
          </React.Fragment>
        ))}
        {[1409, 1418.5].map((y) => (
          <React.Fragment key={y}>
            <rect x="3598" y={y} width="4.3" height="4.3" />
            <rect x="3626" y={y} width="4.3" height="4.3" />
          </React.Fragment>
        ))}
      </g>
      <g fill="none" stroke="#c6c6c6" strokeWidth="3">
        <ellipse cx="3662" cy="1412.5" rx="14" ry="10.5" transform="rotate(-12 3662 1412.5)" />
        <circle cx="3654" cy="1421" r="4.3" strokeWidth="2.4" />
        <path d="M3657 1425L3652.500 1431" strokeWidth="2.4" />
      </g>
      <rect x="3712" y="1402" width="28" height="28" />
      <path d="M3724 1408H3728V1414H3734V1418H3728V1424H3724V1418H3718V1414H3724Z" fill="#ffffff" />
      <rect x="3760" y="1402" width="28" height="28" />
      <rect x="3766" y="1414" width="16" height="4" fill="#ffffff" />
      <g fill="none" stroke="#c6c6c6">
        <path d="M3807 1408V1401H3814M3831 1401H3838V1408M3838 1424V1431H3831M3814 1431H3807V1424" strokeWidth="2.2" />
        <path d="M3815 1409L3829 1423M3829 1409L3815 1423" strokeWidth="3.4" />
      </g>
      <path d="M3812 1406H3820L3812 1414ZM3832 1406V1414L3824 1406ZM3832 1426H3824L3832 1418ZM3812 1426V1418L3820 1426Z" />
      <path d="M3870.500 1403L3877 1409.500V1405H3881V1413.500L3885 1417.500L3883 1419.500L3870.500 1407L3858 1419.500L3856 1417.500Z" />
      <path d="M3870.500 1409.500L3881 1420V1428H3874V1420H3868V1428H3860V1420Z" />
      <rect x="3918" y="1400" width="32" height="32" rx="5" fill="#000000" />
      {[
        [3925.5, 1417.5], [3931.3, 1411.5], [3937, 1417.5], [3942.7, 1411.5],
      ].map(([x, y]) => (
        <line key={x} x1={x} x2={x} y1={y} y2="1425" stroke="#ffffff" strokeWidth="3" strokeLinecap="round" />
      ))}
      <circle cx="3925.5" cy="1407.300" r="1.6" fill="#ee3d5c" />
      <circle cx="3931.3" cy="1407.300" r="1.6" fill="#d65c93" />
      <circle cx="3937" cy="1407.300" r="1.6" fill="#9c82c9" />
      <circle cx="3942.7" cy="1407.300" r="1.6" fill="#8ee0f4" />
      <circle cx="3925.5" cy="1413" r="1.6" fill="#d65c93" />
      <circle cx="3937" cy="1413" r="1.6" fill="#9c82c9" />
    </g>
  );
}

function TrainMetrics() {
  const px = (i: number) => 2661.5 + i * 109.65;
  const py = (v: number) => 1560 + v * 0.40816;
  const rows: [string, number][] = [["1.5", 1605], ["1", 1765.7], ["0.5", 1926], ["0", 2087]];
  return (
    <svg className="block h-[830px] w-[1646px] font-['DejaVu_Sans',sans-serif]" viewBox="2378 1370 1646 830" fill={INK}>
      <ModeBar />
      <text x="3200" y="1479" fontSize="37" textAnchor="middle" textLength="256" lengthAdjust="spacingAndGlyphs">Train Metrics</text>
      <rect x="2598" y="1581" width="1114" height="600" fill="#e5ecf6" />
      <g stroke="#ffffff" strokeWidth="2">
        {[2, 4, 6, 8].map((i) => (
          <line key={i} x1={px(i)} x2={px(i)} y1="1581" y2="2181" />
        ))}
        <line x1={px(0)} x2={px(0)} y1="1581" y2="2181" strokeWidth="4" />
        {rows.map(([n, y]) => (
          <line key={n} x1="2598" x2="3712" y1={y} y2={y} strokeWidth={n === "0" ? 4 : 2} />
        ))}
      </g>
      {metrics.map((m, k) => (
        <g key={m.name} fill={m.color}>
          <line x1="3744" x2="3805" y1={1610 + k * 38} y2={1610 + k * 38} stroke={m.color} strokeWidth="4" />
          <circle cx="3774.500" cy={1610 + k * 38} r="6" />
          <polyline points={m.y.map((v, i) => `${px(i)},${py(v)}`).join(" ")} fill="none" stroke={m.color} strokeWidth="4" />
          {m.y.map((v, i) => (
            <circle key={i} cx={px(i)} cy={py(v)} r="6" />
          ))}
          <text x="3814" y={1618.5 + k * 38} fontSize="24" fill={INK} textLength={m.len}>{m.name}</text>
        </g>
      ))}
      <g fontSize="24">
        {rows.map(([n, y]) => (
          <text key={n} x="2595" y={y + 8} textAnchor="end">{n}</text>
        ))}
        {[0, 2, 4, 6, 8].map((v) => (
          <text key={v} x={px(v)} y="2206.500" textAnchor="middle">{v}</text>
        ))}
      </g>
      <text transform="translate(2519 1879) rotate(-90)" fontSize="28" textAnchor="middle" textLength="84">Metric</text>
    </svg>
  );
}

function Logos() {
  return (
    <svg className="absolute right-0 top-0 h-[117px] w-[624px]" viewBox="3400 0 624 117" fill="#ffffff">
      <g transform="translate(3400 0) scale(0.39796 0.33333)">
        <ellipse cx="257" cy="180" rx="96" ry="115" fill="none" stroke="#ffffff" strokeWidth="5" />
        <path d="M178 180Q182 130 212 105Q240 82 275 87L300 100L312 106L305 115V150H290V160H270V127H245V145H233V162H220V192H207V160H192V180Z" />
        <path d="M323 128Q338 150 338 203H323Z" />
        <path d="M197 130L210 118L214 124L201 136ZM205 120L214 108L220 114L212 124ZM222 106L236 94L240 100L226 112ZM220 118L232 112L228 122Z" fill="#173961" />
        <ellipse cx="255" cy="187" rx="19" ry="23" />
        <ellipse cx="299" cy="205" rx="16" ry="19" />
        <ellipse cx="212" cy="222" rx="14" ry="17" />
        <path d="M196 242Q212 246 227 240Q229 213 240 213H270Q280 213 281 227Q300 233 319 228Q322 245 300 262Q275 280 250 278Q215 272 196 242Z" />
        <rect x="369" y="250" width="402" height="32" />
        <path d="M844 60H999V145H844Z" />
        <path d="M847 145H997Q1000 220 921 271Q843 220 847 145Z" fill="none" stroke="#ffffff" strokeWidth="5" />
        <g fill="none" stroke="#173961" strokeLinecap="round">
          <path d="M885 85Q890 72 900 78Q912 88 908 110Q895 122 882 108Q872 98 885 85" strokeWidth="9" />
          <path d="M910 98Q940 92 968 100Q978 108 985 125" strokeWidth="9" />
          <path d="M905 112Q925 110 940 118L928 133M880 105L858 115M885 112L860 132M885 80L862 76M962 104L950 122L960 132M985 125L975 133" strokeWidth="7" />
          <path d="M975 98Q990 85 965 82Q940 95 930 85Q925 72 945 70Q965 70 978 76" strokeWidth="4" />
          <circle cx="893" cy="94" r="5" stroke="#ffffff" strokeWidth="3" />
        </g>
        <path d="M911 153H931L926 190H916ZM911 256H931L926 220H916ZM880 192V220L912 211V201ZM962 192V220L930 211V201Z" />
        <circle cx="921" cy="206" r="10" fill="#173961" stroke="#ffffff" strokeWidth="6" />
      </g>
      <g className="font-['Lato',sans-serif]">
        <text x="3546" y="46.3" fontSize="26" textLength="161" lengthAdjust="spacingAndGlyphs">GEOSPATIAL</text>
        <text x="3546" y="77.7" fontSize="35" textLength="161" lengthAdjust="spacingAndGlyphs">SYSTEMS</text>
      </g>
      <text className="font-['Liberation_Sans',sans-serif]" x="3802" y="52.3" fontSize="44" fontWeight="700" textLength="218" lengthAdjust="spacingAndGlyphs" stroke="#ffffff" strokeWidth="0.8">Newcastle</text>
      <text className="font-['Liberation_Serif',serif]" x="3799" y="90.5" fontSize="49" textLength="219" lengthAdjust="spacingAndGlyphs">University</text>
    </svg>
  );
}

const card = "flex flex-col items-center rounded-[12px] border-2 border-[#cfcfcf] bg-white text-[#212529]";
const cardTitle = "text-[46px] font-medium leading-[58px] tracking-[-0.8px]";

function Sidebar() {
  return (
    <aside className="flex w-[674px] flex-col items-center gap-[40px] pt-[80px]">
      <section className={`${card} h-[266px] w-[576px] pt-[31px]`}>
        <h2 className={cardTitle}>Sensor Name</h2>
        <p className="mt-[23px] text-center text-[24px] leading-[36px] tracking-[0.2px]">
          PER_PEOPLE_GREYSTTHEATRESOUTH_NO
          <br />
          RTHWEST_TO_SOUTHWEST
        </p>
      </section>
      <section className={`${card} h-[267px] w-[576px] pt-[31px]`}>
        <h2 className={cardTitle}>Quality Metrics</h2>
        <p className="mt-[29px] text-[39.5px] leading-[48px]">57 days 17:1:11</p>
      </section>
      <section className={`${card} h-[1109px] w-[594px] pt-[31px]`}>
        <h2 className={cardTitle}>Map Legend</h2>
        <div className="mt-[79px] -ml-[5px] flex h-[839px] w-[236px] gap-[4px] font-['DejaVu_Sans',sans-serif] text-[22px] leading-[24px]">
          <div className="flex w-[13px] flex-col justify-between text-right text-black">
            <span className="-mt-[12px]">1</span>
            <span className="-mb-[12px]">0</span>
          </div>
          <div className="w-[206px] bg-linear-to-b/srgb from-[#c8323a] to-[#2f72b6]" />
        </div>
      </section>
    </aside>
  );
}

const tabs = [
  ["Data Quality", "w-[246px]"],
  ["Preprocessing", "w-[276px]"],
  ["Engineering", "w-[240px]"],
  ["Data Loader", "w-[244px]"],
  ["Model Performance", "w-[352px]"],
  ["Dummy", "w-[180px]"],
];

export default function App() {
  return (
    <div className="relative flex h-[2200px] w-[4024px] flex-col overflow-hidden bg-white font-['Inter',sans-serif]">
      <header className="relative flex h-[129px] shrink-0 items-center justify-center border-b-[12px] border-[#c8323a] bg-[#173961] pl-[16px]">
        <h1 className="text-[61px] font-medium leading-none tracking-[-1px] text-white">Sensor Dashboard</h1>
        <Logos />
      </header>

      <main className="flex grow">
        <Sidebar />

        <section className="flex w-[1684px] flex-col items-start pl-[80px] pt-[80px]">
          <div className="ml-[166px] flex h-[72px] w-[1193px] items-center rounded-[8px] border-2 border-[#cccccc] pl-[20px] pr-[18px] text-[30.5px] text-[#333333]">
            <span className="grow">Timeliness - Freshness</span>
            <svg className="h-[20px] w-[60px]" viewBox="0 0 60 20">
              <path d="M3 2L19 18M19 2L3 18" stroke="#999999" strokeWidth="3.2" fill="none" />
              <path d="M39 5H59L49 15Z" fill="#999999" />
            </svg>
          </div>
          <div className="mt-[101px] overflow-hidden">
            <CityMap />
          </div>
        </section>

        <section className="flex w-[1666px] flex-col pl-[20px]">
          <nav className="flex h-[193px] shrink-0 items-start border-b-2 border-[#dee2e6] pl-[20px] pt-[80px] text-[31px]">
            {tabs.map(([name, width]) => (
              <div
                key={name}
                className={`${width} flex h-[84px] items-center justify-center whitespace-nowrap border-2 border-b-0 pb-[2px] ${
                  name === "Model Performance"
                    ? "rounded-t-[12px] border-[#dee2e6] text-black"
                    : "border-transparent text-[#2f6bf5]"
                }`}
              >
                {name}
              </div>
            ))}
          </nav>
          <TestPredictions />
          <TrainMetrics />
        </section>
      </main>

      <div className="absolute left-[1320px] top-[2220px] h-[60px] w-[1440px] rounded-[40px] shadow-[0_0_90px_16px_rgba(0,0,0,0.4)]" />

      <div className="absolute left-[3864px] top-[2002px] flex size-[128px] items-center justify-center rounded-full bg-[#489bfb]">
        <svg className="h-[50px] w-[90px]" viewBox="0 0 90 50" fill="none" stroke="#ffffff" strokeWidth="7">
          <path d="M30 3L8 25L30 47M60 3L82 25L60 47" />
        </svg>
      </div>

      <div className="absolute left-[3988px] top-[96px] size-[64px] rounded-full border-2 border-[#e4e4e4] bg-white/60 shadow-[0_6px_24px_rgba(0,0,0,0.15)]">
        <svg className="h-[60px] w-[60px]" viewBox="0 0 60 60" fill="none" stroke="#e3a06f" strokeWidth="3">
          <path d="M36 16L27 20L32 34L40 38M32 34L26 38L30 42L38 44M27 20L36 26" />
        </svg>
      </div>
    </div>
  );
}
